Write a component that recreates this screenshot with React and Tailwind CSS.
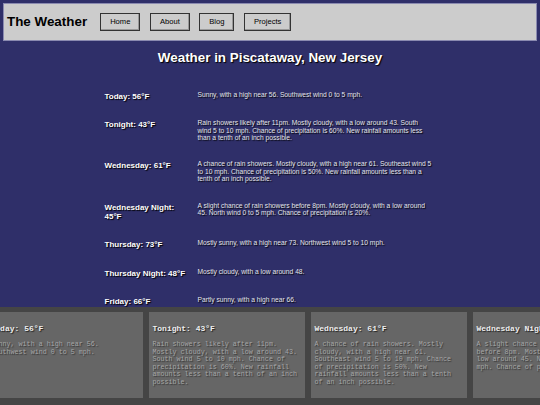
import React from "react";

const NAV = ["Home", "About", "Blog", "Projects"];

const FORECAST = [
  { name: "Today", temp: "56°F", text: "Sunny, with a high near 56. Southwest wind 0 to 5 mph." },
  { name: "Tonight", temp: "43°F", text: "Rain showers likely after 11pm. Mostly cloudy, with a low around 43. South wind 5 to 10 mph. Chance of precipitation is 60%. New rainfall amounts less than a tenth of an inch possible." },
  { name: "Wednesday", temp: "61°F", text: "A chance of rain showers. Mostly cloudy, with a high near 61. Southeast wind 5 to 10 mph. Chance of precipitation is 50%. New rainfall amounts less than a tenth of an inch possible." },
  { name: "Wednesday Night", temp: "45°F", text: "A slight chance of rain showers before 8pm. Mostly cloudy, with a low around 45. North wind 0 to 5 mph. Chance of precipitation is 20%." },
  { name: "Thursday", temp: "73°F", text: "Mostly sunny, with a high near 73. Northwest wind 5 to 10 mph." },
  { name: "Thursday Night", temp: "48°F", text: "Mostly cloudy, with a low around 48." },
  { name: "Friday", temp: "66°F", text: "Partly sunny, with a high near 66." },
  { name: "Friday Night", temp: "47°F", text: "Mostly cloudy, with a low around 47." },
];

export default function App() {
  return (
    <div className="h-[405px] w-[540px] overflow-hidden flex flex-col bg-[#2f2f69] font-['Liberation_Sans',Arial,sans-serif]">
      {/* Header */}
      <header className="mx-[3px] mt-[3px] h-[38px] shrink-0 flex items-center gap-[13px] px-[3px] bg-[#cccccc] border border-[#8a8ab0]">
        <h2 className="text-[13.4px] font-bold text-black leading-none">The Weather</h2>
        <nav className="flex items-center gap-[9.5px]">
          {NAV.map((n) => (
            <button
              key={n}
              className="h-[18px] px-[9px] text-[7.6px] text-black bg-[#cccccc] border border-[#333] shadow-[inset_-1px_-1px_0_#999]"
            >
              {n}
            </button>
          ))}
        </nav>
      </header>

      {/* Forecast list */}
      <main className="flex-1 overflow-hidden flex flex-col items-center">
        <h1 className="mt-[9px] text-[13.4px] leading-[15px] font-bold text-white [text-shadow:1px_1px_1px_#000]">
          Weather in Piscataway, New Jersey
        </h1>
        <div className="mt-[25.5px] w-[331px] flex flex-col gap-[18.5px]">
          {FORECAST.map((f) => (
            <div key={f.name} className="flex items-start gap-[9px]">
              <div className="w-[84px] shrink-0 mt-[1px] text-[8px] leading-[9px] font-bold text-white [text-shadow:1px_1px_1px_#000]">
                {f.name}: {f.temp}
              </div>
              <div className="w-[234px] text-[6.7px] leading-[7.6px] text-[#e6e6ee] [text-shadow:1px_1px_1px_#000]">
                {f.text}
              </div>
            </div>
          ))}
        </div>
      </main>

      {/* Card strip */}
      <section className="h-[98px] shrink-0 bg-[#454545] overflow-hidden pt-[5px]">
        <div className="flex gap-[6px] -ml-[13.5px] font-['Liberation_Mono','Courier_New',monospace]">
          {FORECAST.slice(0, 4).map((f) => (
            <div key={f.name} className="w-[156px] h-[86px] shrink-0 overflow-hidden bg-[#666666] px-[4px] pt-[12px]">
              <div className="text-[8px] leading-[9px] font-bold text-[#eeeeee] [text-shadow:1px_1px_1px_#222]">
                {f.name}: {f.temp}
              </div>
              <p className="mt-[8px] text-[6.7px] leading-[7.6px] text-[#a8a8a8] [text-shadow:1px_1px_1px_#333]">
                {f.text}
              </p>
            </div>
          ))}
        </div>
      </section>
    </div>
  );
}
